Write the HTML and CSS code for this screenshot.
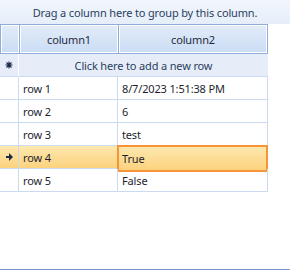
FILE: index.html
```html
<!DOCTYPE html>
<html>
<head>
<meta charset="utf-8">
<link rel="stylesheet" href="styles.css">
</head>
<body>
<div class="view">
  <div class="group-panel">Drag a column here to group by this column.</div>
  <div class="grid">
    <div class="hdr"></div>
    <div class="hdr">column1</div>
    <div class="hdr last">column2</div>

    <div class="newrow-ind"><svg width="8" height="8" viewBox="0 0 8 8"><path d="M4 0.5v7M0.5 4h7M1.5 1.5l5 5M6.5 1.5l-5 5" stroke="#1c2a4a" stroke-width="1.1" fill="none"/></svg></div>
    <div class="newrow">Click here to add a new row</div>

    <div class="ind"></div><div class="cell">row 1</div><div class="cell">8/7/2023 1:51:38 PM</div>
    <div class="ind"></div><div class="cell">row 2</div><div class="cell">6</div>
    <div class="ind"></div><div class="cell">row 3</div><div class="cell">test</div>
    <div class="ind sel"><svg width="7" height="8" viewBox="0 0 7 8"><path d="M0 3h3V0l4 4-4 4V5H0z" fill="#1c2a4a"/></svg></div><div class="cell sel">row 4</div><div class="cell sel focus">True</div>
    <div class="ind"></div><div class="cell">row 5</div><div class="cell">False</div>
  </div>
</div>
</body>
</html>
```
FILE: styles.css
```css
html, body { margin: 0; padding: 0; background: #fff; }
.view {
  width: 290px;
  height: 269px;
  border-bottom: 1px solid #7698cd;
  font-family: "Noto Sans", "Open Sans", sans-serif;
  font-size: 11px;
  letter-spacing: -0.15px;
  color: #1e1e2e;
}
.group-panel {
  height: 24px;
  line-height: 26px;
  text-align: center;
  color: #2b3f5e;
  background: linear-gradient(#f2f6fc, #e6eef9);
}
.grid {
  width: 268px;
  display: grid;
  grid-template-columns: 19px 99px 150px;
  grid-template-rows: 30px;
  grid-auto-rows: 23px;
}
.hdr {
  height: 30px;
  box-sizing: border-box;
  border-top: 1px solid #8eadd9;
  border-bottom: 1px solid #8eadd9;
  border-left: 1px solid #8eadd9;
  box-shadow: inset 1px 1px 0 #fff, inset -1px -1px 0 #fff;
  background: linear-gradient(#e3ecf9, #cadcf4);
  display: flex;
  align-items: center;
  justify-content: center;
  color: #1e2a40;
}
.hdr.last { border-right: 1px solid #8eadd9; }
.newrow-ind {
  background: #e6edf8;
  border-bottom: 1px solid #c9daf1;
  border-right: 1px solid #fff;
  display: flex;
  align-items: center;
  justify-content: center;
  padding-bottom: 1px;
  box-sizing: border-box;
}
.newrow {
  grid-column: 2 / 4;
  background: #e6edf8;
  border-bottom: 1px solid #c9daf1;
  display: flex;
  align-items: center;
  justify-content: center;
  color: #2b3f5e;
}
.ind {
  border-bottom: 1px solid #c9daf1;
  border-right: 1px solid #c9daf1;
  display: flex;
  align-items: center;
  justify-content: center;
}
.cell {
  border-bottom: 1px solid #c9daf1;
  border-right: 1px solid #c9daf1;
  display: flex;
  align-items: center;
  padding-left: 4px;
  color: #1e1e2e;
}
.sel {
  background: linear-gradient(#fde8ae, #fcd27e);
}
.focus {
  border: 2px solid #f79437;
  margin-left: -1px;
  margin-top: -1px;
  height: 23px;
  padding-left: 3px;
}
```
